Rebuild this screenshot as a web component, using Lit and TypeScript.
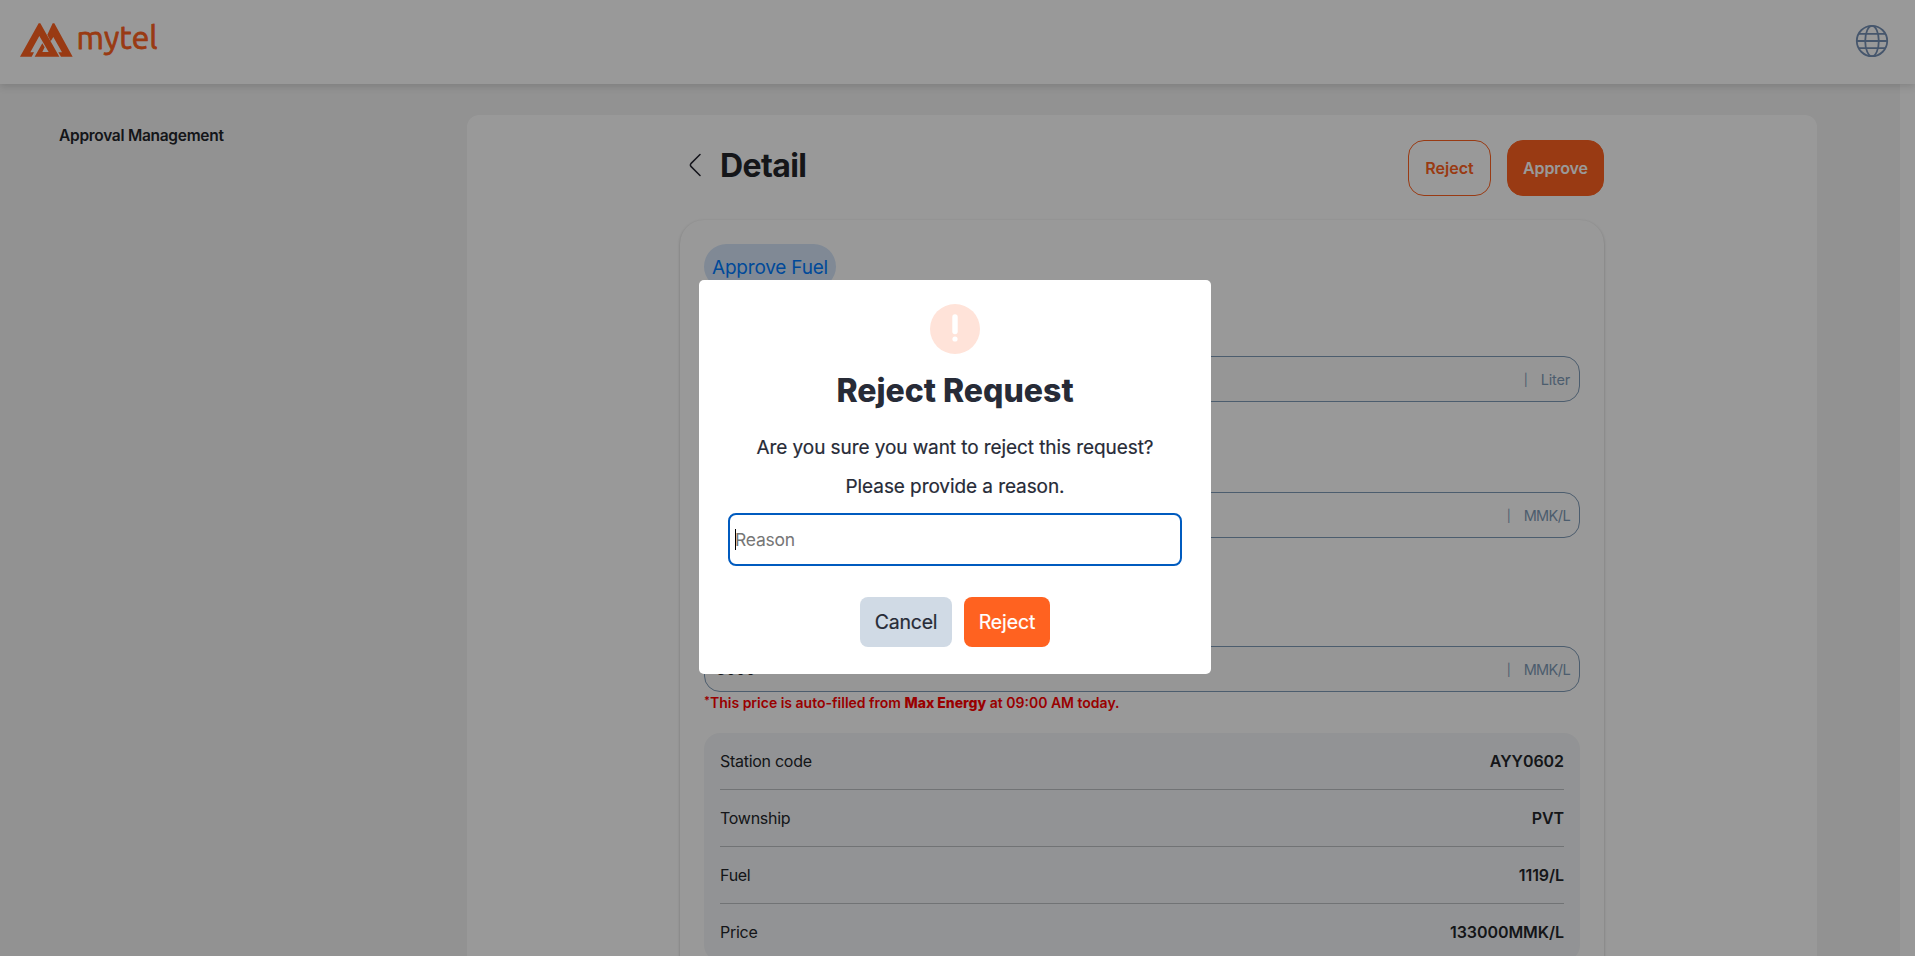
import { LitElement, html, css } from "lit";
import { customElement } from "lit/decorators.js";

const ROWS: [string, string][] = [
  ["Station code", "AYY0602"],
  ["Township", "PVT"],
  ["Fuel", "1119/L"],
  ["Price", "133000MMK/L"],
];

@customElement("reject-dialog")
class RejectDialog extends LitElement {
  static styles = css`
    :host {
      position: absolute;
      z-index: 2;
      inset: 0;
      display: flex;
      align-items: center;
      justify-content: center;
      padding: 0 5px 2px 0;
      background: rgba(0, 0, 0, 0.4);
    }
    .modal {
      box-sizing: border-box;
      width: 512px;
      height: 394px;
      padding: 24px 29px 27px;
      border-radius: 5px;
      background: #fff;
      color: #272b37;
      display: flex;
      flex-direction: column;
      align-items: center;
    }
    .icon { display: block; width: 50px; height: 50px; }
    h2 { margin: 17px 0 0; font-size: 32px; line-height: 40px; font-weight: 800; }
    p { margin: 0; font-size: 19px; line-height: 39px; letter-spacing: -0.08px; -webkit-text-stroke: 0.2px; }
    .first { margin-top: 17px; }
    .field {
      box-sizing: border-box;
      width: 454px;
      height: 53px;
      margin-top: 7px;
      padding-left: 5px;
      border: 2px solid #005bbf;
      border-radius: 8px;
      display: flex;
      align-items: center;
      color: #767676;
      font-size: 17.5px;
      letter-spacing: -0.25px;
    }
    .caret { width: 1px; height: 21px; margin-right: -1px; background: #000; }
    .actions { display: flex; gap: 12px; margin-top: 31px; }
    button {
      height: 50px;
      padding: 0;
      border: 0;
      border-radius: 8px;
      font: 400 19.5px Inter, sans-serif;
      letter-spacing: -0.1px;
      -webkit-text-stroke: 0.2px;
    }
    .cancel { width: 92px; background: #d0dae5; color: #272b37; letter-spacing: -0.2px; }
    .reject { width: 86px; background: #ff6220; color: #fff; }
  `;

  render() {
    return html`
      <div class="modal">
        <svg class="icon" viewBox="0 0 50 50">
          <circle cx="25" cy="25" r="25" fill="#ffe3d9" />
          <path d="M25 13V27.5" stroke="#fff" stroke-width="5.4" stroke-linecap="round" />
          <circle cx="25" cy="35" r="2.6" fill="#fff" />
        </svg>
        <h2>Reject Request</h2>
        <p class="first">Are you sure you want to reject this request?</p>
        <p>Please provide a reason.</p>
        <div class="field"><span class="caret"></span>Reason</div>
        <div class="actions">
          <button class="cancel">Cancel</button>
          <button class="reject">Reject</button>
        </div>
      </div>
    `;
  }
}

@customElement("app-root")
class AppRoot extends LitElement {
  static styles = css`
    :host {
      position: relative;
      display: flex;
      flex-direction: column;
      height: 956px;
      overflow: hidden;
      background: #f3f3f3;
      color: #23262b;
      font-family: Inter, sans-serif;
    }
    header {
      position: relative;
      z-index: 1;
      box-sizing: border-box;
      flex: none;
      height: 84px;
      padding: 0 26px 2px 20px;
      display: flex;
      align-items: center;
      justify-content: space-between;
      background: #fff;
      box-shadow: 0 2px 8px rgba(0, 0, 0, 0.15);
    }
    .logo { display: block; width: 150px; height: 44px; overflow: visible; }
    .globe { display: block; width: 34px; height: 34px; }
    .body { flex: 1; min-height: 0; display: flex; }
    nav { box-sizing: border-box; width: 467px; padding: 41px 0 0 59px; }
    .nav-item { font-size: 15.5px; line-height: 22px; font-weight: 600; letter-spacing: -0.28px; }
    main {
      box-sizing: border-box;
      width: 1350px;
      margin-top: 31px;
      padding: 25px 213px 0;
      border-radius: 12px 12px 0 0;
      background: #fff;
    }
    .track { width: 15px; margin-left: auto; background: #fdfdfd; }
    .heading { display: flex; align-items: center; height: 56px; }
    .chevron { display: block; width: 12px; height: 24px; margin: 0 19px 7px 9px; }
    h1 { flex: 1; margin: 0 0 5px; font-size: 32px; line-height: 40px; font-weight: 700; letter-spacing: -0.6px; }
    .btn {
      box-sizing: border-box;
      height: 56px;
      padding: 0;
      border: 1px solid #ff6220;
      border-radius: 16px;
      font: 600 16px Inter, sans-serif;
    }
    .outline { width: 83px; margin-right: 16px; background: #fff; color: #ff6220; }
    .solid { width: 97px; background: #ff6220; color: #fff; letter-spacing: -0.1px; }
    .card {
      box-sizing: border-box;
      height: 900px;
      margin-top: 24px;
      padding: 24px;
      border-radius: 24px;
      box-shadow: 0 1px 3px rgba(0, 0, 0, 0.24);
    }
    .pill {
      box-sizing: border-box;
      width: 132px;
      height: 45px;
      border-radius: 24px;
      background: #d5e5f9;
      color: #007bff;
      font-size: 19px;
      line-height: 47px;
      letter-spacing: -0.2px;
      text-align: center;
    }
    .input {
      box-sizing: border-box;
      height: 46px;
      padding: 0 9px 0 11px;
      border: 1px solid #7f9bb7;
      border-radius: 16px;
      display: flex;
      align-items: center;
      justify-content: space-between;
      font-size: 16px;
      font-weight: 500;
    }
    .readonly { background: #fafafa; }
    .liters { margin-top: 67px; }
    .price { margin-top: 90px; }
    .auto { margin-top: 108px; }
    .value { letter-spacing: -0.4px; }
    .unit { display: flex; align-items: center; gap: 13px; margin-left: auto; color: #7f9bb7; font-size: 14.5px; font-weight: 400; }
    .bar { font-size: 12px; }
    .unit-name { letter-spacing: -0.2px; }
    .tight { letter-spacing: -0.6px; }
    .note { height: 41px; color: #f00; font-size: 14px; line-height: 22px; font-weight: 600; white-space: nowrap; }
    .star { font-size: 11px; vertical-align: 4px; line-height: 0; }
    .brand { font-weight: 800; }
    .table { padding: 0 16px; border-radius: 16px; background: #f4f6f8; }
    .row {
      box-sizing: border-box;
      height: 57px;
      border-bottom: 1px solid #bcc0c4;
      display: flex;
      align-items: center;
      justify-content: space-between;
      font-size: 16px;
      letter-spacing: -0.28px;
    }
    .strong { font-weight: 600; letter-spacing: -0.06px; }
  `;

  render() {
    return html`
      <header>
        <svg class="logo" viewBox="0 0 150 44">
          <g fill="#ff6220" transform="translate(-20 -19) scale(0.33333)">
            <path d="M116 70H121L142 107 153 126 178 170H104L127 130 134 142 127 156H146L118 108 91 157H102L95 170H60Z" />
            <path d="M158 70H163L218 170H183L175 157H186L160 111 152 124 142 104Z" />
          </g>
          <text x="56.5" y="29.6" font-family="Ubuntu, Lato, sans-serif" font-size="31" textLength="81" lengthAdjust="spacingAndGlyphs" fill="#ff6220" stroke="#ff6220" stroke-width="0.8" stroke-linejoin="round">mytel</text>
        </svg>
        <svg class="globe" viewBox="0 0 34 34" fill="none" stroke="#7590b5" stroke-width="1.8">
          <circle cx="17" cy="17" r="15.2" />
          <ellipse cx="17" cy="17" rx="6.8" ry="15.2" />
          <path d="M1.5 17H32.5M4 9.8H30M4 24.2H30" />
        </svg>
      </header>
      <div class="body">
        <nav><div class="nav-item">Approval Management</div></nav>
        <main>
          <div class="heading">
            <svg class="chevron" viewBox="0 0 12 24" fill="none" stroke="#23232f" stroke-width="1.5" stroke-linecap="round" stroke-linejoin="round">
              <path d="M11 1.5L1.9 10.6Q0.9 12 1.9 13.4L11 22.5" />
            </svg>
            <h1>Detail</h1>
            <button class="btn outline">Reject</button>
            <button class="btn solid">Approve</button>
          </div>
          <section class="card">
            <div class="pill">Approve Fuel</div>
            <div class="input readonly liters">
              <div class="unit"><span class="bar">|</span><span class="unit-name">Liter</span></div>
            </div>
            <div class="input price">
              <div class="unit"><span class="bar">|</span><span class="unit-name tight">MMK/L</span></div>
            </div>
            <div class="input readonly auto">
              <span class="value">3000</span>
              <div class="unit"><span class="bar">|</span><span class="unit-name tight">MMK/L</span></div>
            </div>
            <div class="note"><span class="star">*</span>This price is auto-filled from <span class="brand">Max Energy</span> at 09:00 AM today.</div>
            <div class="table">
              ${ROWS.map(([label, value]) => html`<div class="row"><span>${label}</span><span class="strong">${value}</span></div>`)}
            </div>
          </section>
        </main>
        <div class="track"></div>
      </div>
      <reject-dialog></reject-dialog>
    `;
  }
}
